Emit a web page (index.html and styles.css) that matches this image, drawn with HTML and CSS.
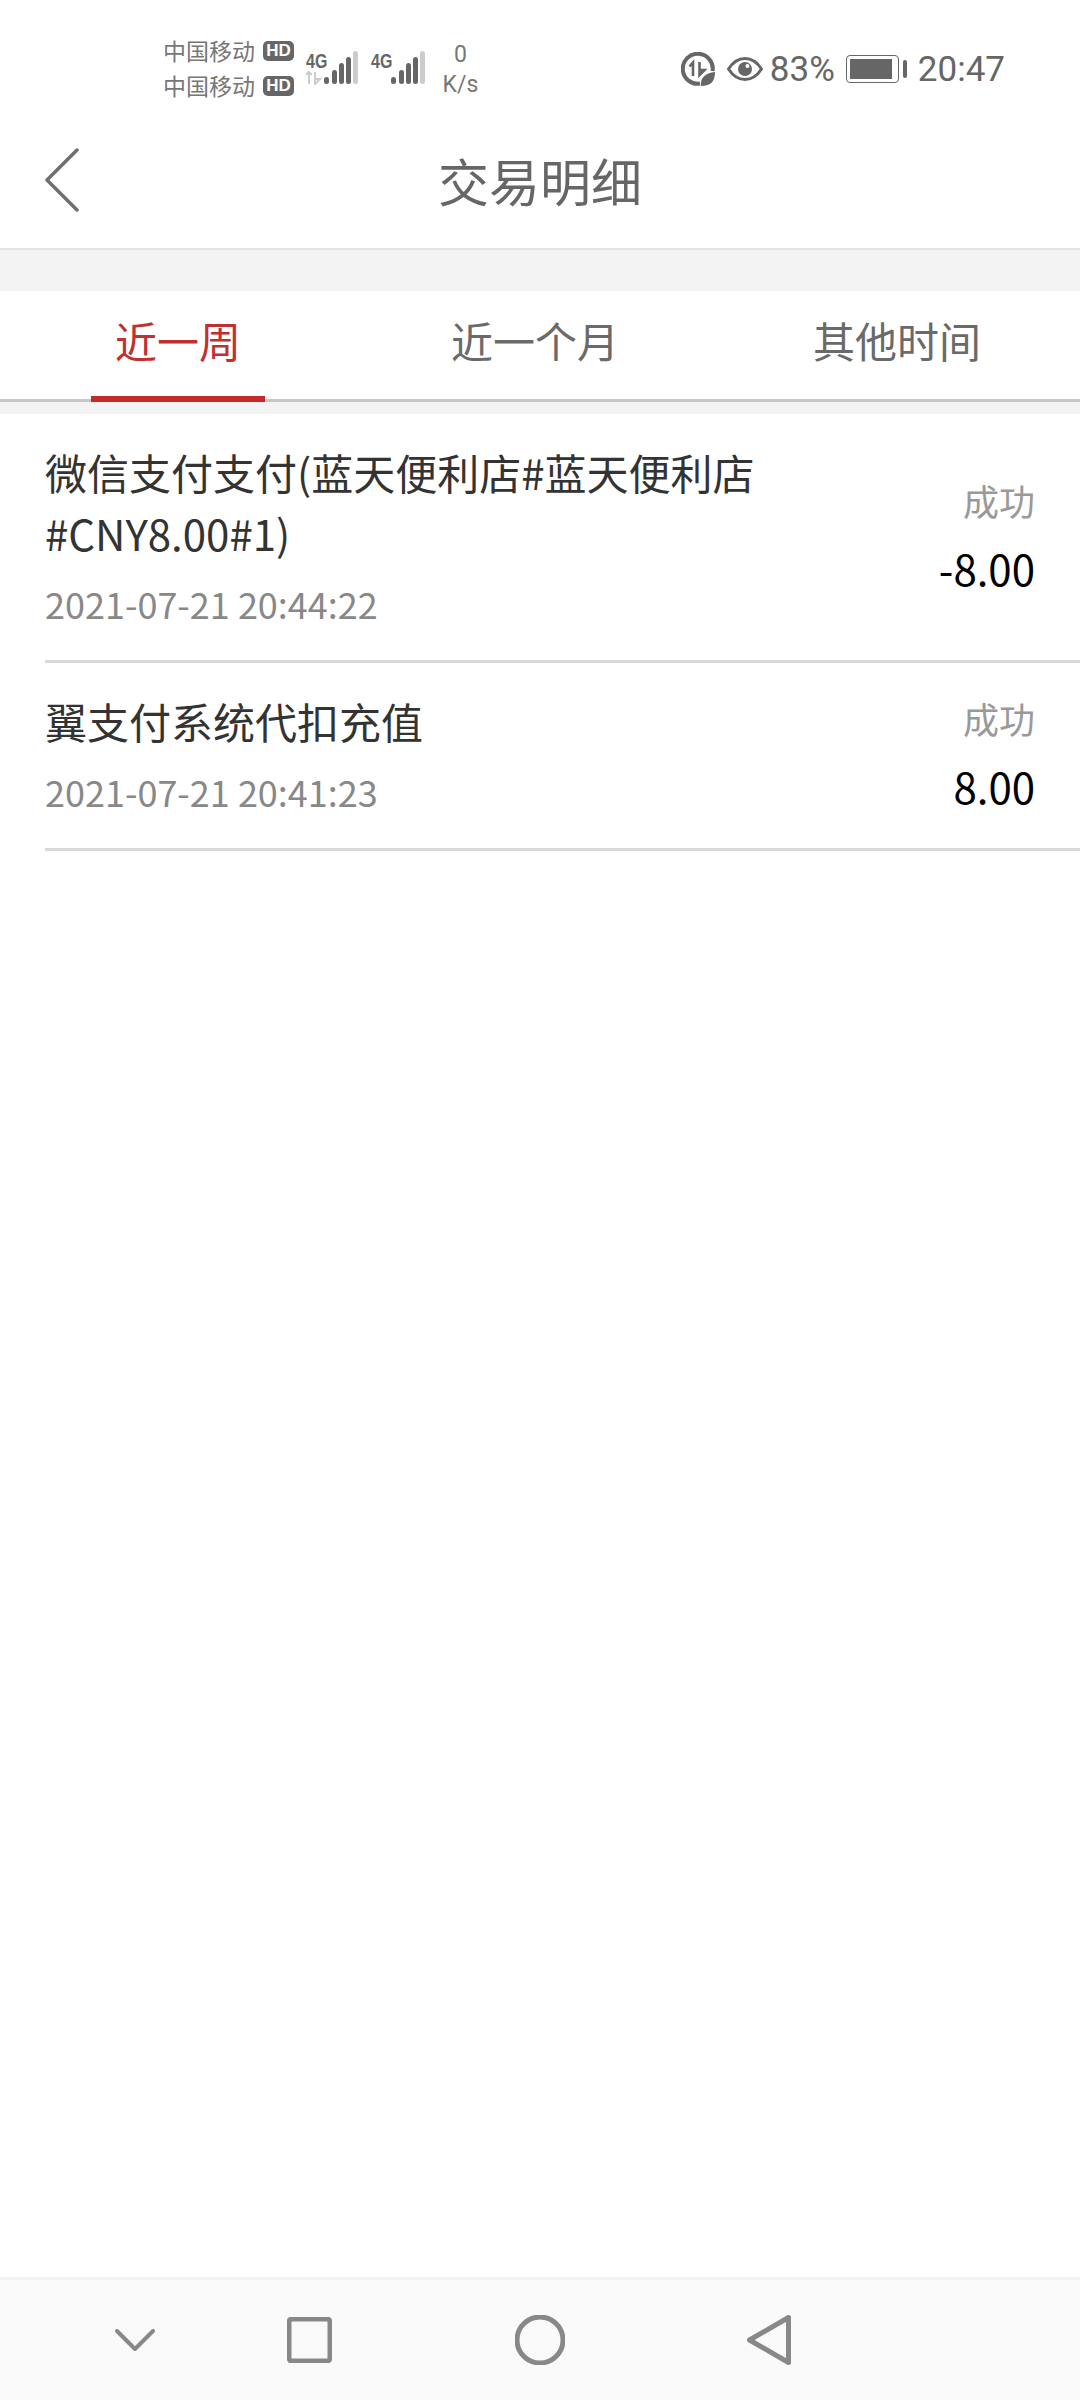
FILE: index.html
```html
<!DOCTYPE html>
<html lang="zh-CN">
<head>
  <meta charset="UTF-8">
  <meta name="viewport" content="width=device-width, initial-scale=1.0">
  <link rel="stylesheet" href="styles.css">

  <title>交易明细</title>
</head>
<body>
  <div class="status-bar">
    <div class="carriers">
      <div class="carrier">中国移动<span class="hd">HD</span></div>
      <div class="carrier">中国移动<span class="hd">HD</span></div>
    </div>
    <div class="signal">
      <span class="net">4G</span>
      <svg class="signal-bars" width="52" height="34" viewBox="0 0 52 34">
        <path class="arrows" d="M3 33V21M0 24l3-3 3 3M9 21v12M9 33l5-5H9z"/>
        <rect x="18" y="26" width="5" height="7" rx="2.5" class="bar"/>
        <rect x="26" y="19" width="5" height="14" rx="2.5" class="bar"/>
        <rect x="33" y="12" width="5" height="21" rx="2.5" class="bar"/>
        <rect x="40" y="6" width="5" height="27" rx="2.5" class="bar"/>
        <rect x="47" y="0" width="5" height="33" rx="2.5" class="bar-off"/>
      </svg>
    </div>
    <div class="signal signal-two">
      <span class="net">4G</span>
      <svg class="signal-bars" width="36" height="34" viewBox="16 0 36 34">
        <rect x="18" y="26" width="5" height="7" rx="2.5" class="bar"/>
        <rect x="26" y="19" width="5" height="14" rx="2.5" class="bar"/>
        <rect x="33" y="12" width="5" height="21" rx="2.5" class="bar"/>
        <rect x="40" y="6" width="5" height="27" rx="2.5" class="bar"/>
        <rect x="47" y="0" width="5" height="33" rx="2.5" class="bar-off"/>
      </svg>
    </div>
    <div class="speed"><span>0</span><span>K/s</span></div>

    <div class="status-right">
      <svg class="saver" width="34" height="34" viewBox="0 0 34 34">
        <path d="M19 31.6A15 15 0 1 1 31.6 19" fill="none" stroke="#666" stroke-width="4"/>
        <path d="M12 24V11M8.5 14.5 12 10.5V24M18.5 10v13M18.5 23l5-5h-5z" fill="none" stroke="#666" stroke-width="2.6"/>
        <path d="M20 34c-1-8 4-13 14-14 0 9-4 14-14 14z" fill="#666"/>
      </svg>
      <svg class="eye" width="36" height="24" viewBox="0 0 36 24">
        <path d="M1.5 12C6 5 11.500 1.500 18 1.500S30 5 34.500 12C30 19 24.500 22.500 18 22.500S6 19 1.500 12z" fill="none" stroke="#666" stroke-width="3"/>
        <circle cx="18" cy="12" r="7" fill="#666"/>
        <circle cx="20.500" cy="9" r="2" fill="#fff"/>
      </svg>
      <span class="pct">83%</span>
      <div class="battery"><div class="battery-fill"></div></div>
      <div class="battery-tip"></div>
      <span class="time">20:47</span>
    </div>
  </div>

  <div class="header">
    <svg class="back" width="36" height="64" viewBox="0 0 36 64">
      <path d="M33 2 3 32l30 30" fill="none" stroke="#707070" stroke-width="3.500" stroke-linecap="round" stroke-linejoin="round"/>
    </svg>
    <h1>交易明细</h1>
  </div>

  <div class="gap"></div>

  <div class="tabs">
    <div class="tab active">近一周</div>
    <div class="tab">近一个月</div>
    <div class="tab">其他时间</div>
  </div>

  <div class="gap-small"></div>

  <div class="list">
    <div class="row">
      <div class="row-left">
        <div class="row-title">微信支付支付(蓝天便利店#蓝天便利店#CNY8.00#1)</div>
        <div class="row-date">2021-07-21 20:44:22</div>
      </div>
      <div class="row-right">
        <div class="row-status">成功</div>
        <div class="row-amount">-8.00</div>
      </div>
    </div>
    <div class="row">
      <div class="row-left">
        <div class="row-title">翼支付系统代扣充值</div>
        <div class="row-date">2021-07-21 20:41:23</div>
      </div>
      <div class="row-right">
        <div class="row-status">成功</div>
        <div class="row-amount">8.00</div>
      </div>
    </div>
  </div>

  <div class="nav-bar">
    <svg width="40" height="22" viewBox="0 0 40 22">
      <path d="M2 2l18 18L38 2" fill="none" stroke="#888" stroke-width="4" stroke-linecap="round" stroke-linejoin="round"/>
    </svg>
    <svg width="45" height="46" viewBox="0 0 45 46">
      <rect x="2" y="2" width="41" height="42" rx="3" fill="none" stroke="#888" stroke-width="5"/>
    </svg>
    <svg width="50" height="50" viewBox="0 0 50 50">
      <circle cx="25" cy="25" r="23" fill="none" stroke="#888" stroke-width="5"/>
    </svg>
    <svg width="44" height="50" viewBox="0 0 44 50">
      <path d="M41.500 2.500v45L2.500 25z" fill="none" stroke="#888" stroke-width="5" stroke-linejoin="round"/>
    </svg>
  </div>
</body>
</html>
```

FILE: styles.css
```css
body {
  margin: 0;
  height: 2400px;
  display: flex;
  flex-direction: column;
  background-color: #fff;
  font-family: "Noto Sans CJK SC", "Noto Sans", sans-serif;
}

/* status bar */
.status-bar {
  height: 82px;
  padding: 28px 75px 0 163px;
  display: flex;
  align-items: flex-start;
  color: #666;
}

.carriers {
  width: 134px;
  margin-top: 5px;
}

.carrier {
  height: 35px;
  display: flex;
  align-items: center;
  font-size: 23px;
  line-height: 35px;
  color: #777;
}

.hd {
  width: 31px;
  height: 20px;
  margin-left: 8px;
  border-radius: 5px;
  background-color: #666;
  color: #fff;
  font-family: "Liberation Sans", sans-serif;
  font-size: 17px;
  font-weight: bold;
  line-height: 20px;
  text-align: center;
}

.signal {
  width: 52px;
  height: 66px;
  margin-left: 9px;
  position: relative;
}

.signal-two {
  width: 36px;
  margin-left: 31px;
}

.net {
  position: absolute;
  top: 23px;
  left: 0;
  font-family: "Liberation Sans", sans-serif;
  font-size: 20px;
  font-weight: bold;
  line-height: 20px;
  transform: scaleX(0.8);
  transform-origin: left;
}

.signal-two .net {
  left: -18px;
}

.signal-bars {
  position: absolute;
  left: 0;
  top: 23px;
}

.arrows {
  fill: none;
  stroke: #ccc;
  stroke-width: 2;
}

.bar {
  fill: #666;
}

.bar-off {
  fill: #ccc;
}

.speed {
  width: 35px;
  margin-left: 18px;
  margin-top: 12px;
  display: flex;
  flex-direction: column;
  align-items: center;
  font-family: "Roboto", sans-serif;
  font-size: 23px;
  line-height: 30px;
  color: #777;
}

.status-right {
  margin-left: auto;
  height: 82px;
  display: flex;
  align-items: center;
  font-family: "Roboto", sans-serif;
  font-size: 35px;
  color: #666;
}

.saver {
  margin-right: 12px;
}

.eye {
  margin-right: 7px;
}

.pct {
  margin-right: 11px;
}

.battery {
  box-sizing: border-box;
  width: 53px;
  height: 28px;
  padding: 3px;
  border: 1px solid #666;
  border-radius: 4px;
}

.battery-fill {
  width: 42px;
  height: 20px;
  background-color: #666;
}

.battery-tip {
  width: 4px;
  height: 18px;
  margin-left: 4px;
  margin-right: 11px;
  border-radius: 2px;
  background-color: #666;
}

/* title */
.header {
  height: 138px;
  display: flex;
  align-items: center;
  justify-content: center;
  position: relative;
  border-bottom: 2px solid #e4e4e4;
}

.back {
  position: absolute;
  left: 44px;
  top: 38px;
}

h1 {
  margin: 2px 0 0;
  font-size: 51px;
  font-weight: 400;
  color: #666;
}

.gap {
  height: 41px;
  background-color: #f3f3f3;
}

.gap-small {
  height: 12px;
  background-color: #f3f3f3;
}

/* tabs */
.tabs {
  height: 111px;
  display: grid;
  grid-template-columns: 356px 358px 366px;
  box-sizing: border-box;
  border-bottom: 3px solid #c6c6c6;
}

.tab {
  height: 111px;
  box-sizing: border-box;
  font-size: 42px;
  line-height: 98px;
  text-align: center;
  color: #6a6a6a;
  position: relative;
}

.tab.active {
  color: #c13030;
}

.tab.active::after {
  content: "";
  position: absolute;
  left: 91px;
  bottom: 0;
  width: 174px;
  height: 6px;
  background-color: #c32a2a;
}

/* list */
.list {
  flex: 1;
}

.row {
  margin-left: 45px;
  padding-right: 45px;
  display: flex;
  align-items: center;
  justify-content: space-between;
  border-bottom: 3px solid #d9d9d9;
}

.row-left {
  width: 800px;
  padding: 27px 0 32px;
}

.row-title {
  font-size: 42px;
  line-height: 61px;
  color: #333;
}

.row-date {
  margin-top: 15px;
  font-size: 36px;
  line-height: 50px;
  color: #888;
}

.row-right {
  margin-top: -3px;
  text-align: right;
}

.row-status {
  font-size: 36px;
  line-height: 50px;
  color: #999;
}

.row-amount {
  margin-top: 14px;
  font-size: 42px;
  line-height: 58px;
  color: #000;
}

/* navigation */
.nav-bar {
  height: 123px;
  box-sizing: border-box;
  padding-left: 115px;
  display: flex;
  align-items: center;
  background-color: #fafafa;
  border-top: 3px solid #f3f3f3;
}

.nav-bar svg:nth-child(2) {
  margin-left: 132px;
}

.nav-bar svg:nth-child(3) {
  margin-left: 183px;
}

.nav-bar svg:nth-child(4) {
  margin-left: 182px;
}
```
